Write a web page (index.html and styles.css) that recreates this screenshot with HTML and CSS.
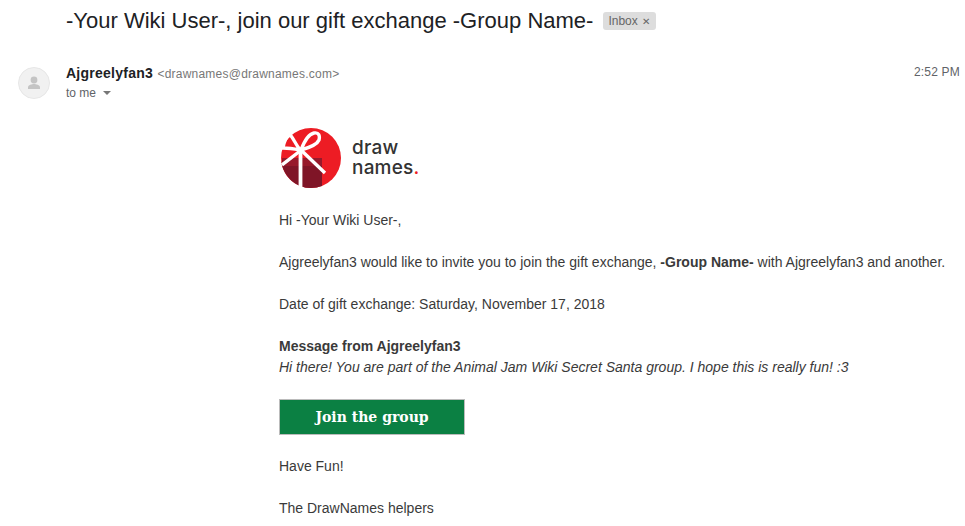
FILE: index.html
```html
<!DOCTYPE html>
<html>
<head>
    <title>-Your Wiki User-, join our gift exchange -Group Name-</title>
    <link rel="stylesheet" href="styles.css">
</head>
<body>
    <div class="subject-row">
        <h1 class="subject">-Your Wiki User-, join our gift exchange -Group Name-</h1>
        <span class="label">Inbox <span class="label-x">&#10005;</span></span>
    </div>
    <div class="message-head">
        <div class="avatar">
            <svg width="32" height="32" viewBox="0 0 32 32">
                <circle cx="16" cy="16" r="15.5" fill="#f1f1f1" stroke="#e6e6e6"/>
                <circle cx="16" cy="13" r="3.4" fill="#c4c4c4"/>
                <path d="M10 22v-1.6c0-2.2 4-3.3 6-3.3s6 1.1 6 3.3V22z" fill="#c4c4c4"/>
            </svg>
        </div>
        <div class="sender">
            <div class="from"><b class="name">Ajgreelyfan3</b> <span class="address">&lt;drawnames@drawnames.com&gt;</span></div>
            <div class="to">to me <span class="caret"></span></div>
        </div>
        <div class="time">2:52 PM</div>
    </div>
    <div class="mail">
        <div class="logo">
            <svg width="60" height="60" viewBox="0 0 60 60">
                <circle cx="30" cy="30" r="30" fill="#ed1c24"/>
                <path d="M1.500 30H41V57.900A30 30 0 0 1 30 60 30 30 0 0 1 .5 35z" fill="#7f1527"/>
                <path d="M1.500 30H41V38H2.500z" fill="#97192b"/>
                <path d="M19.500 22V60" stroke="#fff" stroke-width="3.800" fill="none"/>
                <path d="M19 22C14 15 11 8 9 7 5 8 3 14 2 20c6 0 12 1 17 2zM20 22C23 14 28 6 33 5c5-1 6 3 5 7-2 5-11 8-18 10zM19 23L1 37M21 23L44 45" stroke="#fff" stroke-width="3.400" fill="none"/>
            </svg>
            <div class="logo-text">draw<br>names<span class="logo-dot">.</span></div>
        </div>
        <p>Hi -Your Wiki User-,</p>
        <p>Ajgreelyfan3 would like to invite you to join the gift exchange, <b>-Group Name-</b> with Ajgreelyfan3 and another.</p>
        <p>Date of gift exchange: Saturday, November 17, 2018</p>
        <p><b>Message from Ajgreelyfan3</b><br><i>Hi there! You are part of the Animal Jam Wiki Secret Santa group. I hope this is really fun! :3</i></p>
        <a class="join" href="#">Join the group</a>
        <p>Have Fun!</p>
        <p>The DrawNames helpers</p>
    </div>
</body>
</html>
```

FILE: styles.css
```css
html, body {
    height: 526px;
    overflow: hidden;
}
body {
    margin: 0;
    font-family: "Liberation Sans", Arial, sans-serif;
    background: #fff;
    color: #3a3a3a;
    font-size: 14px;
}
.subject-row {
    display: flex;
    align-items: center;
    padding: 7px 0 0 66px;
    height: 28px;
}
.subject {
    margin: 0;
    font-size: 22px;
    font-weight: 400;
    line-height: 28px;
    color: #202124;
}
.label {
    margin-left: 10px;
    padding: 0 6px 0 5px;
    height: 18px;
    line-height: 18px;
    font-size: 12px;
    color: #666;
    background: #ddd;
    border-radius: 3px;
}
.label-x {
    font-size: 10px;
    margin-left: 1px;
}
.message-head {
    display: flex;
    padding: 28px 5px 0 18px;
}
.avatar {
    height: 32px;
    width: 32px;
    margin-top: 4px;
}
.sender {
    margin-left: 16px;
    flex: 1;
}
.from {
    line-height: 20px;
    font-size: 12px;
    color: #777;
}
.name {
    font-size: 14px;
    line-height: 20px;
    letter-spacing: .25px;
    color: #202124;
}
.address {
    letter-spacing: .23px;
    margin-left: 1px;
}
.to {
    font-size: 12px;
    line-height: 19px;
    color: #5f6368;
}
.caret {
    display: inline-block;
    margin-left: 4px;
    vertical-align: 2px;
    border-top: 4px solid #777;
    border-left: 4px solid transparent;
    border-right: 4px solid transparent;
}
.time {
    font-size: 12px;
    line-height: 18px;
    letter-spacing: .2px;
    color: #5f6368;
}
.mail {
    margin: 25px 0 0 279px;
    line-height: 21px;
    color: #3a3a3a;
}
.mail p {
    margin: 0 0 21px;
    white-space: nowrap;
}
.logo {
    display: flex;
    align-items: center;
    margin: 0 0 22px 2px;
    height: 60px;
}
.logo-text {
    margin-left: 11px;
    font-family: "Inter", sans-serif;
    font-size: 19px;
    font-weight: 500;
    letter-spacing: .2px;
    line-height: 20px;
    color: #333;
}
.logo-dot {
    color: #ed1c24;
}
.join {
    display: block;
    box-sizing: border-box;
    width: 186px;
    height: 36px;
    margin: 0 0 21px;
    border: 1px solid #bbb;
    background: #0b8043;
    color: #fff;
    font-family: "DejaVu Serif", serif;
    font-size: 14px;
    font-weight: 700;
    line-height: 34px;
    text-align: center;
    text-decoration: none;
}
```
